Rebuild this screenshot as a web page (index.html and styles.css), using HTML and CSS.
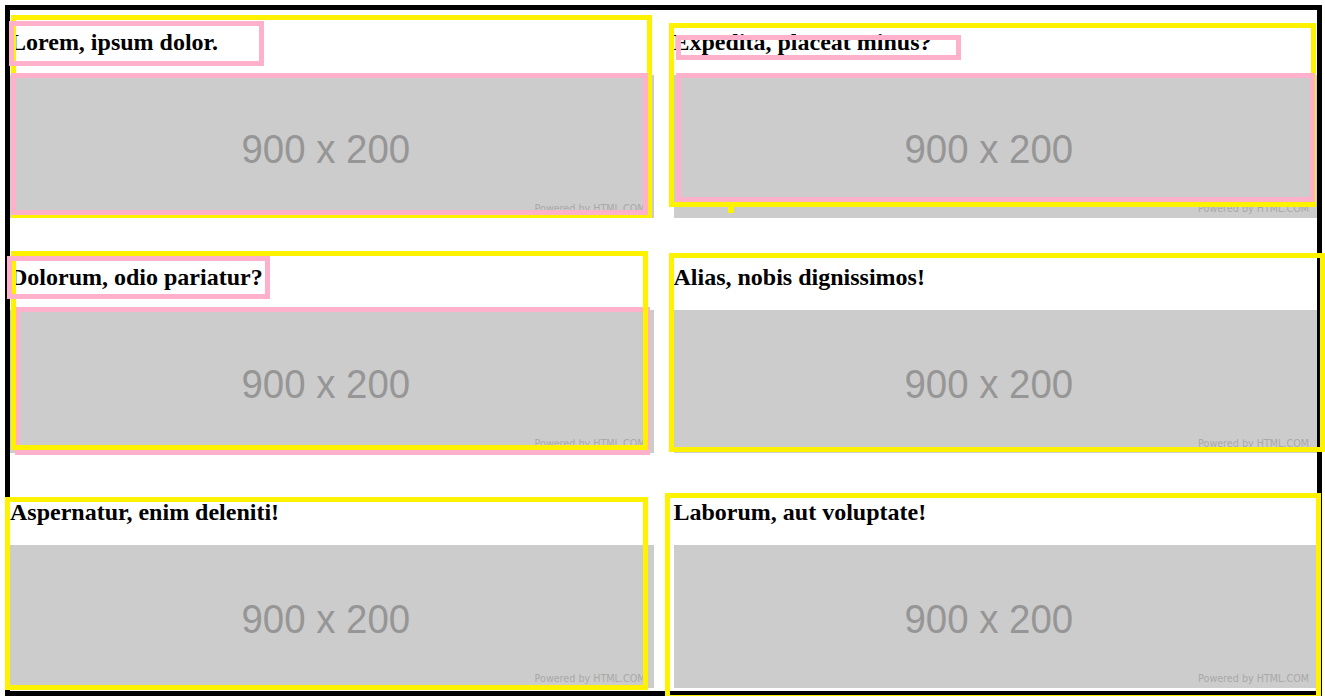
FILE: index.html
```html
<!DOCTYPE HTML>
<html>
<head>
    <meta charset="utf-8">
    <title>Grid</title>
    <link rel="stylesheet" href="styles.css">
</head>
<body>
    <div class="page">
        <div class="grid">
            <div class="card card-a">
                <h2>Lorem, ipsum dolor.</h2>
                <div class="ph"><span class="ph-size">900 x 200</span><span class="ph-by">Powered by HTML.COM</span></div>
                <i class="box yellow y1"></i>
                <i class="box pink p1"></i>
                <i class="box pink p2"></i>
            </div>
            <div class="card card-b">
                <h2>Expedita, placeat minus?</h2>
                <div class="ph"><span class="ph-size">900 x 200</span><span class="ph-by">Powered by HTML.COM</span></div>
                <i class="box yellow y2"></i>
                <i class="dot"></i>
                <i class="box pink p3"></i>
                <i class="box pink p4"></i>
            </div>
            <div class="card card-c">
                <h2>Dolorum, odio pariatur?</h2>
                <div class="ph"><span class="ph-size">900 x 200</span><span class="ph-by">Powered by HTML.COM</span></div>
                <i class="box pink p6"></i>
                <i class="box yellow y3"></i>
                <i class="box pink p5"></i>
            </div>
            <div class="card card-d">
                <h2>Alias, nobis dignissimos!</h2>
                <div class="ph"><span class="ph-size">900 x 200</span><span class="ph-by">Powered by HTML.COM</span></div>
                <i class="box yellow y4"></i>
            </div>
            <div class="card card-e">
                <h2>Aspernatur, enim deleniti!</h2>
                <div class="ph"><span class="ph-size">900 x 200</span><span class="ph-by">Powered by HTML.COM</span></div>
                <i class="box yellow y5"></i>
            </div>
            <div class="card card-f">
                <h2>Laborum, aut voluptate!</h2>
                <div class="ph"><span class="ph-size">900 x 200</span><span class="ph-by">Powered by HTML.COM</span></div>
                <i class="box yellow y6"></i>
            </div>
        </div>
    </div>
</body>
</html>
```

FILE: styles.css
```css
html, body {
    margin: 0;
    padding: 0;
    background: #ffffff;
}

.page {
    margin: 5px 5px 0;
    width: 1307px;
    border: 5px solid #000000;
    font-family: "Liberation Serif", "Times New Roman", serif;
}

.grid {
    display: grid;
    grid-template-columns: 1fr 1fr;
    column-gap: 20px;
    row-gap: 24px;
}

.card {
    position: relative;
    padding-bottom: 3px;
}
.card h2 {
    margin: 18px 0 19px;
    font-size: 24px;
    line-height: 28px;
    font-weight: bold;
    color: #000000;
    white-space: nowrap;
}

/*placeholder picture*/
.ph {
    position: relative;
    box-sizing: border-box;
    height: 143px;
    padding: 6px 12px 0 0;
    background: #cccccc;
    display: flex;
    align-items: center;
    justify-content: center;
}
.ph-size {
    font-family: "Liberation Sans", Arial, sans-serif;
    font-size: 40px;
    color: #969696;
    transform: scaleX(0.96);
}
.ph-by {
    position: absolute;
    right: 8px;
    bottom: 4px;
    font-family: "DejaVu Sans", sans-serif;
    font-size: 9.6px;
    color: #a9a9a9;
}

/*outlines*/
.box {
    position: absolute;
    box-sizing: border-box;
    border: 5px solid;
}
.yellow { border-color: #fff200; }
.pink { border-color: #ffb0ca; }

.y1 { left: 1px; top: 5px; width: 641px; height: 203px; }
.p1 { left: -1px; top: 11px; width: 255px; height: 45px; }
.p2 { left: 1px; top: 63px; width: 637px; height: 142px; }

.y2 { left: -5px; top: 13px; width: 647px; height: 184px; }
.dot {
    position: absolute;
    left: 54px;
    top: 197px;
    width: 6px;
    height: 6px;
    background: #fff200;
}
.p3 { left: 2px; top: 25px; width: 285px; height: 25px; }
.p4 { left: 2px; top: 63px; width: 639px; height: 129px; }

.p6 { left: 5px; top: 62px; width: 635px; height: 148px; }
.y3 { left: 1px; top: 6px; width: 637px; height: 199px; }
.p5 { left: -3px; top: 11px; width: 263px; height: 43px; }

.y4 { left: -5px; top: 8px; width: 656px; height: 199px; }
.y5 { left: -5px; top: 17px; width: 643px; height: 193px; }
.y6 { left: -9px; top: 13px; width: 656px; height: 207px; }
```
